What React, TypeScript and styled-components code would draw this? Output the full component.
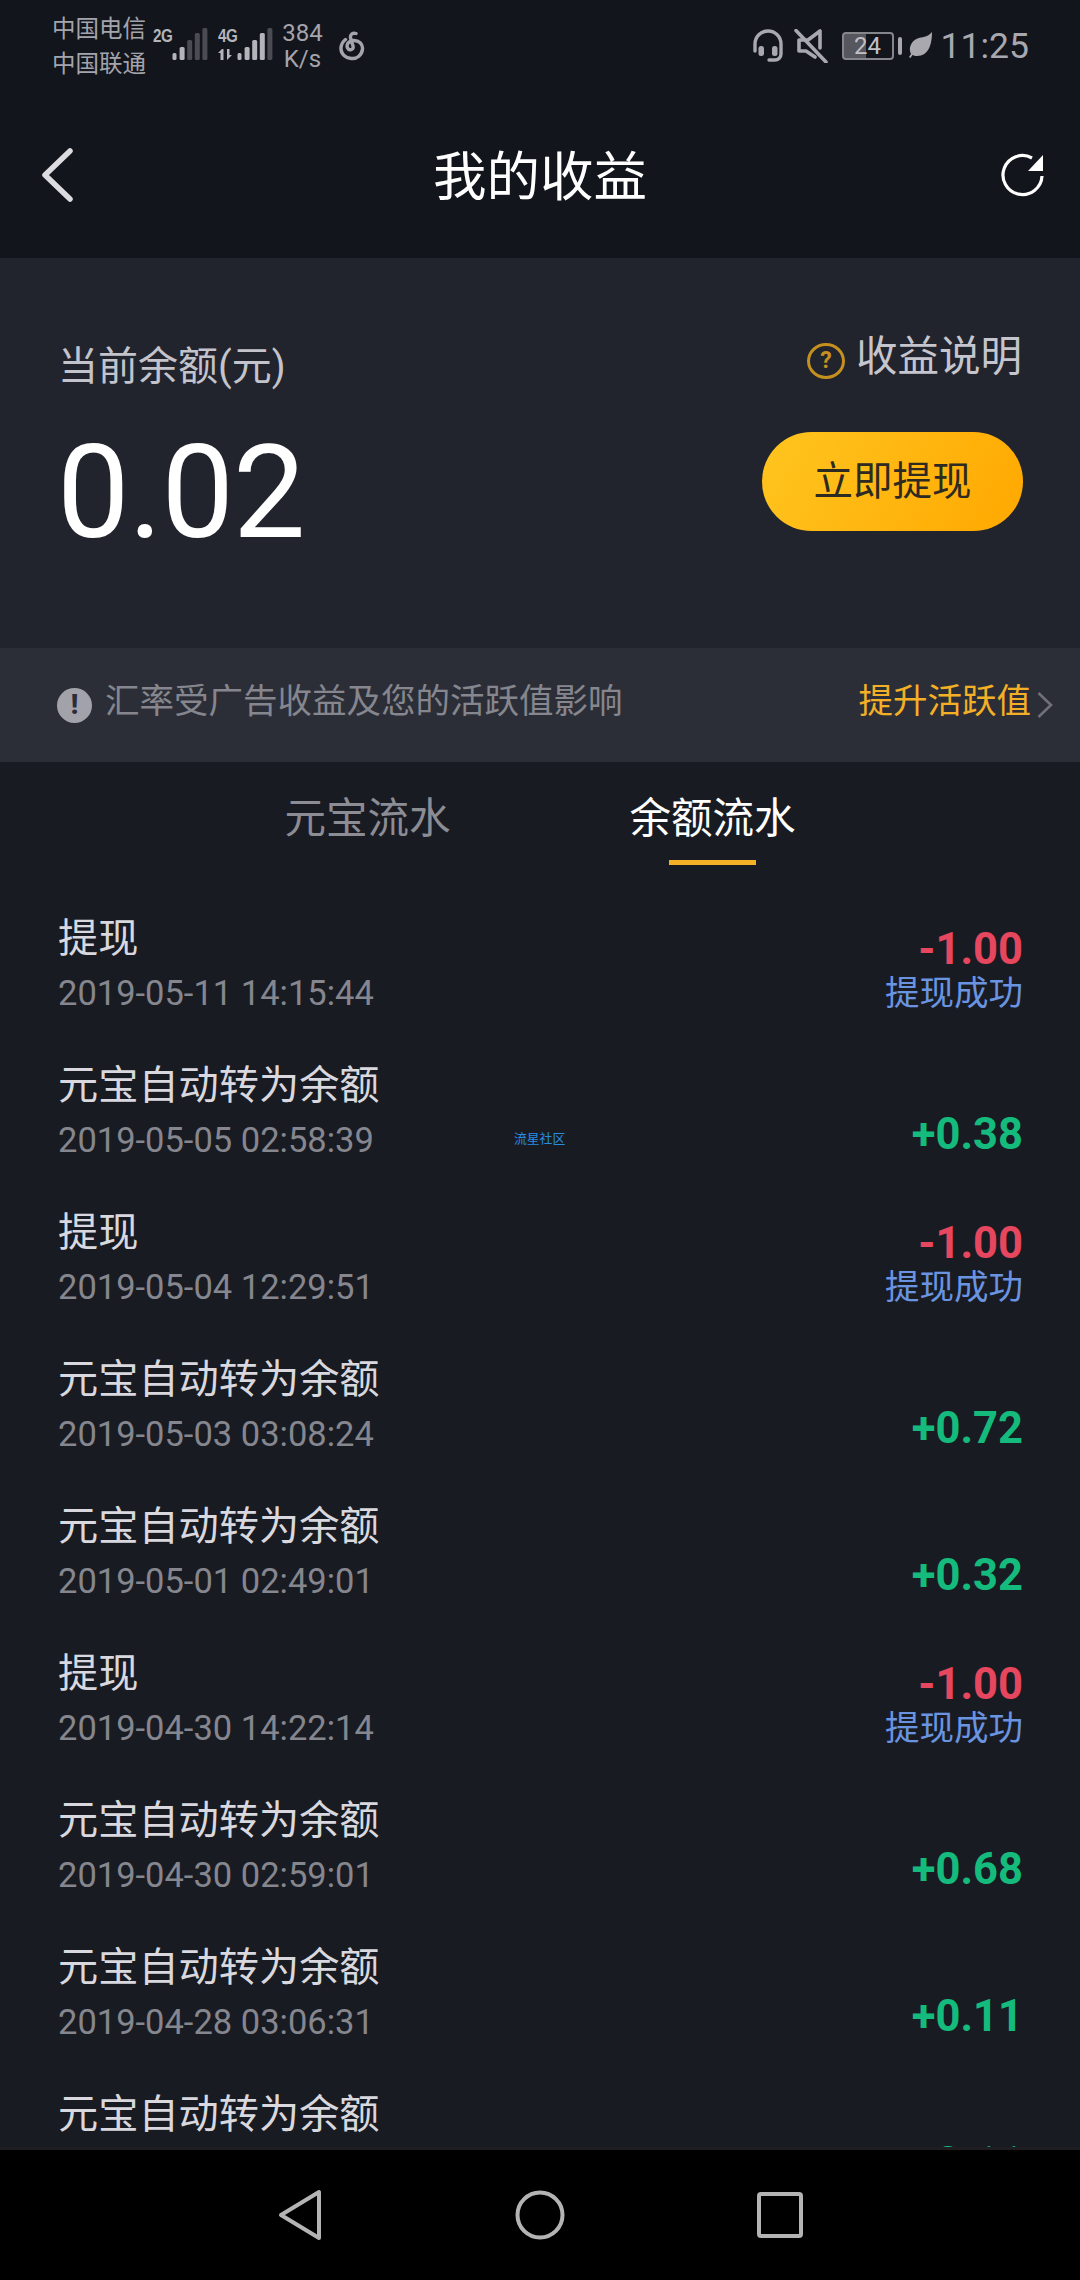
import React from "react";
import styled, { createGlobalStyle } from "styled-components";

const Global = createGlobalStyle`
  html, body { margin: 0; padding: 0; background: #191b23; }
  * { box-sizing: border-box; }
  body { font-family: Roboto, "Noto Sans CJK SC", sans-serif; }
`;

const Screen = styled.div`
  position: relative;
  width: 1080px;
  height: 2280px;
  display: flex;
  flex-direction: column;
  overflow: hidden;
  background: #191b23;
`;

const Top = styled.div`
  background: #13151c;
  height: 258px;
  display: flex;
  flex-direction: column;
  flex: none;
`;

const StatusBar = styled.div`
  height: 92px;
  padding: 12px 51px 0 52px;
  display: flex;
  justify-content: space-between;
  align-items: flex-start;
  color: #a4a4ac;
`;

const StatusSide = styled.div`
  display: flex;
  align-items: flex-start;
`;

const Carrier = styled.div`
  width: 101px;
  font-size: 23.5px;
  line-height: 35px;
  white-space: nowrap;
`;

const NetBlock = styled.div`
  width: 65px;
  height: 52px;
  display: flex;
  align-items: flex-end;
  padding-bottom: 8px;
  margin-top: 4px;
`;

const NetLabels = styled.div`
  width: 19px;
  height: 44px;
  display: flex;
  flex-direction: column;
  align-self: flex-start;
  margin-top: 13px;
`;

const NetType = styled.span`
  display: block;
  font-size: 19px;
  line-height: 14px;
  font-weight: 700;
  letter-spacing: -0.5px;
  color: #b4b4ba;
  font-family: "Liberation Sans", sans-serif;
  transform: scaleX(0.8);
  transform-origin: left center;
  white-space: nowrap;
`;

const ArrowsSvg = styled.svg`
  margin-top: 6px;
  flex: none;
`;

const Speed = styled.div`
  width: 41px;
  margin: 8px 14px 0 -1px;
  font-size: 24px;
  line-height: 26px;
  text-align: center;
`;

const LogoSvg = styled.svg`
  margin-top: 19px;
  flex: none;
`;

const Clock = styled.span`
  font-size: 35.5px;
  line-height: 40px;
  margin-top: 14px;
  color: #a8a8b0;
`;

const Battery = styled.div`
  width: 52px;
  height: 28px;
  margin: 20px 0 0 14px;
  border: 2px solid #85858c;
  border-radius: 4px;
  background: linear-gradient(90deg, #55565e 46%, transparent 46%);
  color: #c0c0c6;
  font-size: 24px;
  line-height: 25px;
  text-align: center;
`;

const BatteryNub = styled.div`
  width: 4px;
  height: 18px;
  border-radius: 2px;
  background: #a8a8ae;
  margin: 25px 7px 0 4px;
`;

const StatusIcon = styled.svg<{ $gap?: number; $top?: number }>`
  flex: none;
  margin-top: ${(p) => p.$top ?? 17}px;
  margin-right: ${(p) => p.$gap ?? 0}px;
`;

const Header = styled.header`
  flex: 1;
  display: grid;
  grid-template-columns: 1fr auto 1fr;
  align-items: center;
  padding: 0 36px;
`;

const BackSvg = styled.svg`
  margin-left: 5px;
`;

const Title = styled.h1`
  margin: 6px 0 0;
  font-size: 53.5px;
  font-weight: 400;
  color: #fff;
  line-height: 70px;
`;

const HeaderEnd = styled.div`
  display: flex;
  justify-content: flex-end;
`;

const Panel = styled.section`
  height: 390px;
  flex: none;
  background: #22242d;
  display: flex;
  justify-content: space-between;
  padding: 74px 57px 0 58px;
`;

const BalanceCol = styled.div`
  display: flex;
  flex-direction: column;
  padding-top: 10px;
`;

const BalanceLabel = styled.div`
  font-size: 40px;
  line-height: 50px;
  color: #c3c3cb;
`;

const BalanceValue = styled.div`
  margin: 38px 0 0 -1px;
  font-size: 129px;
  line-height: 126px;
  color: #fff;
  letter-spacing: -1px;
`;

const ActionCol = styled.div`
  display: flex;
  flex-direction: column;
  align-items: flex-end;
`;

const Help = styled.div`
  display: flex;
  align-items: center;
  gap: 11px;
  font-size: 41.5px;
  line-height: 50px;
  color: #c5c5cd;
  padding-right: 1px;
`;

const HelpMark = styled.span`
  width: 38px;
  height: 36px;
  margin-top: 8px;
  border: 3px solid #c4901e;
  border-radius: 50%;
  color: #c4901e;
  font-size: 23px;
  font-weight: 700;
  line-height: 30px;
  text-align: center;
`;

const WithdrawButton = styled.button`
  margin-top: 50px;
  width: 261px;
  height: 99px;
  border: 0;
  border-radius: 50px;
  background: linear-gradient(120deg, #ffc520, #ffa800);
  color: #2d2a22;
  font: 400 39.5px/92px Roboto, "Noto Sans CJK SC", sans-serif;
  padding: 0;
`;

const Notice = styled.div`
  height: 114px;
  flex: none;
  background: #2c2e37;
  display: flex;
  align-items: center;
  justify-content: space-between;
  padding: 0 27px 0 57px;
  font-size: 34.5px;
  line-height: 44px;
`;

const NoticeText = styled.div`
  display: flex;
  align-items: center;
  gap: 13px;
  color: #85868e;
`;

const NoticeCopy = styled.span`
  padding-bottom: 8px;
`;

const AlertMark = styled.span`
  width: 35px;
  height: 35px;
  border-radius: 50%;
  background: #a2a2aa;
  color: #2c2e37;
  font-size: 27px;
  font-weight: 900;
  line-height: 35px;
  text-align: center;
`;

const NoticeLink = styled.div`
  display: flex;
  align-items: center;
  gap: 6px;
  color: #f3b026;
`;

const Tabs = styled.div`
  height: 118px;
  flex: none;
  padding-top: 32px;
  display: flex;
  justify-content: center;
  gap: 178px;
`;

const Tab = styled.div<{ $active?: boolean }>`
  width: 167px;
  display: flex;
  flex-direction: column;
  align-items: center;
  font-size: 41.5px;
  line-height: 50px;
  white-space: nowrap;
  color: ${(p) => (p.$active ? "#ffffff" : "#8b8c94")};
  &::after {
    content: "";
    width: 87px;
    height: 5px;
    margin-top: 16px;
    background: ${(p) => (p.$active ? "#f3b026" : "transparent")};
  }
`;

const List = styled.div`
  flex: 1;
  min-height: 0;
  overflow: hidden;
  position: relative;
`;

const Row = styled.div`
  height: 147px;
  display: flex;
  justify-content: space-between;
  padding: 34px 57px 14px 58px;
`;

const RowMain = styled.div`
  display: flex;
  flex-direction: column;
`;

const RowTitle = styled.div`
  font-size: 40.2px;
  line-height: 50px;
  color: #d8d8de;
`;

const RowDate = styled.div`
  margin-top: 9px;
  font-size: 34.5px;
  line-height: 40px;
  color: #85868e;
`;

const RowSide = styled.div`
  display: flex;
  flex-direction: column;
  justify-content: flex-end;
  align-items: flex-end;
`;

const Amount = styled.div<{ $up: boolean }>`
  font-size: 43.5px;
  line-height: 40px;
  font-weight: 700;
  padding-bottom: 5px;
  color: ${(p) => (p.$up ? "#14bb7c" : "#e6475f")};
`;

const RowStatus = styled.div`
  margin-top: -2px;
  font-size: 34.5px;
  line-height: 40px;
  color: #6a94e0;
`;

const Watermark = styled.span`
  position: absolute;
  left: 514px;
  top: 250px;
  font-size: 12.8px;
  line-height: 18px;
  color: #2a8ce0;
`;

const NavBar = styled.nav`
  height: 130px;
  flex: none;
  background: #000;
  box-shadow: 0 -3px 0 #1f1d22;
  position: relative;
  display: flex;
  justify-content: center;
  align-items: center;
`;

const NavButton = styled.div`
  width: 240px;
  display: flex;
  justify-content: center;
`;

const rows = [
  { t: "提现", d: "2019-05-11 14:15:44", a: "-1.00", s: "提现成功" },
  { t: "元宝自动转为余额", d: "2019-05-05 02:58:39", a: "+0.38" },
  { t: "提现", d: "2019-05-04 12:29:51", a: "-1.00", s: "提现成功" },
  { t: "元宝自动转为余额", d: "2019-05-03 03:08:24", a: "+0.72" },
  { t: "元宝自动转为余额", d: "2019-05-01 02:49:01", a: "+0.32" },
  { t: "提现", d: "2019-04-30 14:22:14", a: "-1.00", s: "提现成功" },
  { t: "元宝自动转为余额", d: "2019-04-30 02:59:01", a: "+0.68" },
  { t: "元宝自动转为余额", d: "2019-04-28 03:06:31", a: "+0.11" },
  { t: "元宝自动转为余额", d: "2019-04-27 03:01:12", a: "+0.11" },
];

const Bars = ({ lit }: { lit: number }) => {
  const hs = [7, 13, 20, 27, 32];
  return (
    <svg width="36" height="32" viewBox="0 0 36 32">
      {hs.map((h, i) => (
        <rect
          key={i}
          x={i === 0 ? 0.5 : i * 7.6}
          y={32 - h}
          width={i === 0 ? 4 : 5}
          height={h}
          rx="1.5"
          fill={i < lit ? "#b4b4ba" : "#4b4c53"}
        />
      ))}
    </svg>
  );
};

export default function App() {
  return (
    <Screen>
      <Global />
      <Top>
        <StatusBar>
          <StatusSide>
            <Carrier>
              中国电信
              <br />
              中国联通
            </Carrier>
            <NetBlock>
              <NetLabels>
                <NetType>2G</NetType>
              </NetLabels>
              <Bars lit={2} />
            </NetBlock>
            <NetBlock>
              <NetLabels>
                <NetType>4G</NetType>
                <ArrowsSvg width="18" height="11" viewBox="0 0 18 11">
                  <path d="M4 0 L0 4 H2.5 V11 H5.5 V0 Z M9 0 V11 L14 6 H11.5 V0 Z" fill="#b4b4ba" />
                </ArrowsSvg>
              </NetLabels>
              <Bars lit={4} />
            </NetBlock>
            <Speed>
              384
              <br />
              K/s
            </Speed>
            <LogoSvg width="30" height="31" viewBox="0 0 30 31" fill="none" stroke="#a4a4ac" strokeWidth="3.4" strokeLinecap="round">
              <path d="M19 2.5 C16 1.5 13 3 13.5 7 L16 15 C17 19 12 20 10.5 17 C9 13 12 10 16 9.5 C22 9 26 13 25.5 18 C25 24 20 28 14.5 27.5 C8 27 3.5 22.5 4 16.5 C4.3 13 6 10.5 8.5 8.5" />
            </LogoSvg>
          </StatusSide>
          <StatusSide>
            <StatusIcon width="32" height="34" viewBox="0 0 32 34" fill="none" $gap={10} $top={16}>
              <path d="M3 23 V16 A13 13 0 0 1 29 16 V26 A6 6 0 0 1 23 32 H17" stroke="#a8a8ae" strokeWidth="3.4" strokeLinecap="round" />
              <rect x="6.5" y="18" width="5.5" height="10" rx="2.5" fill="#a8a8ae" />
              <rect x="20" y="18" width="5.5" height="10" rx="2.5" fill="#a8a8ae" />
            </StatusIcon>
            <StatusIcon width="34" height="34" viewBox="0 0 34 34" fill="none" stroke="#a8a8ae" strokeWidth="3.6">
              <path d="M26 2 V19 M26 2 L14 11 H5 V22 H12 L21 28" strokeLinecap="round" strokeLinejoin="round" />
              <path d="M2 1.5 L32 33" strokeLinecap="round" />
            </StatusIcon>
            <Battery>24</Battery>
            <BatteryNub />
            <StatusIcon width="23" height="26" viewBox="0 0 23 26" $gap={9} $top={20}>
              <path d="M23 0 C23 12 20 24 8 24 C6 24 4.5 23.5 3.5 23 L1.5 26 L0 25 L2 22 C-1 17 2 8 10 6 C15 5 20 4 23 0 Z" fill="#a8a8ae" />
            </StatusIcon>
            <Clock>11:25</Clock>
          </StatusSide>
        </StatusBar>
        <Header>
          <BackSvg width="33" height="54" viewBox="0 0 33 54" fill="none">
            <path d="M29 3 L4 27 L29 51" stroke="#dcdce0" strokeWidth="5.5" strokeLinecap="round" strokeLinejoin="round" />
          </BackSvg>
          <Title>我的收益</Title>
          <HeaderEnd>
            <svg width="43" height="44" viewBox="0 0 43 44" fill="none">
              <path d="M31 5 A19.5 19.5 0 1 0 41 23" stroke="#fff" strokeWidth="3.2" />
              <path d="M42 2 V18 H27 Z" fill="#fff" />
            </svg>
          </HeaderEnd>
        </Header>
      </Top>
      <Panel>
        <BalanceCol>
          <BalanceLabel>当前余额(元)</BalanceLabel>
          <BalanceValue>0.02</BalanceValue>
        </BalanceCol>
        <ActionCol>
          <Help>
            <HelpMark>?</HelpMark>
            收益说明
          </Help>
          <WithdrawButton>立即提现</WithdrawButton>
        </ActionCol>
      </Panel>
      <Notice>
        <NoticeText>
          <AlertMark>!</AlertMark>
          <NoticeCopy>汇率受广告收益及您的活跃值影响</NoticeCopy>
        </NoticeText>
        <NoticeLink>
          <NoticeCopy>提升活跃值</NoticeCopy>
          <svg width="16" height="30" viewBox="0 0 16 30" fill="none">
            <path d="M1.5 3 L14 15 L1.5 27" stroke="#6f7078" strokeWidth="2.6" />
          </svg>
        </NoticeLink>
      </Notice>
      <Tabs>
        <Tab>元宝流水</Tab>
        <Tab $active>余额流水</Tab>
      </Tabs>
      <List>
        {rows.map((r) => (
          <Row key={r.d}>
            <RowMain>
              <RowTitle>{r.t}</RowTitle>
              <RowDate>{r.d}</RowDate>
            </RowMain>
            <RowSide>
              <Amount $up={r.a.startsWith("+")}>{r.a}</Amount>
              {r.s && <RowStatus>{r.s}</RowStatus>}
            </RowSide>
          </Row>
        ))}
        <Watermark>流星社区</Watermark>
      </List>
      <NavBar>
        <NavButton>
          <svg width="44" height="52" viewBox="0 0 44 52" fill="none">
            <path d="M41 3 V49 L3 26 Z" stroke="#b4b4b4" strokeWidth="4" strokeLinejoin="round" />
          </svg>
        </NavButton>
        <NavButton>
          <svg width="50" height="50" viewBox="0 0 50 50" fill="none">
            <circle cx="25" cy="25" r="22.5" stroke="#b4b4b4" strokeWidth="4" />
          </svg>
        </NavButton>
        <NavButton>
          <svg width="46" height="46" viewBox="0 0 46 46" fill="none">
            <rect x="2" y="2" width="42" height="42" rx="2" stroke="#b4b4b4" strokeWidth="4" />
          </svg>
        </NavButton>
      </NavBar>
    </Screen>
  );
}
